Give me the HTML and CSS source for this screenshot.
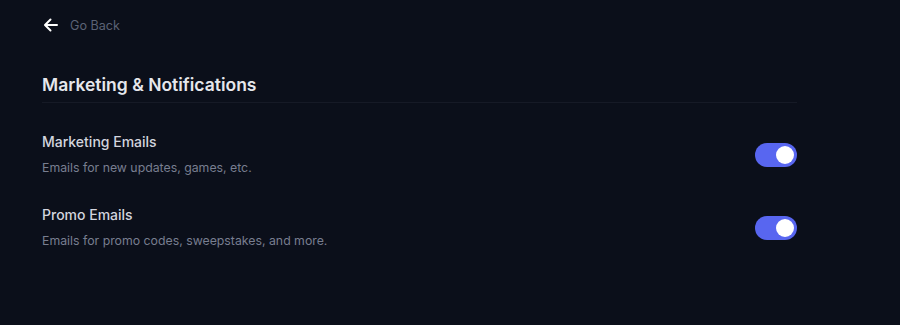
FILE: index.html
```html
<!DOCTYPE html>
<html>
<head>
<meta charset="utf-8">
<link rel="stylesheet" href="styles.css">
</head>
<body>
<div class="page">
  <a class="back" href="#">
    <svg class="back-icon" width="16" height="16" viewBox="0 0 16 16" fill="none" stroke="#ffffff" stroke-width="2" stroke-linecap="round" stroke-linejoin="round">
      <path d="M14 8H2.5M7.5 2.5L2 8l5.5 5.5"/>
    </svg>
    <span>Go Back</span>
  </a>
  <h1 class="title">Marketing &amp; Notifications</h1>
  <div class="list">
    <div class="row">
      <div class="text">
        <div class="label">Marketing Emails</div>
        <div class="desc">Emails for new updates, games, etc.</div>
      </div>
      <div class="toggle on"><span class="knob"></span></div>
    </div>
    <div class="row">
      <div class="text">
        <div class="label">Promo Emails</div>
        <div class="desc">Emails for promo codes, sweepstakes, and more.</div>
      </div>
      <div class="toggle on"><span class="knob"></span></div>
    </div>
  </div>
</div>
</body>
</html>
```

FILE: styles.css
```css
html, body {
  margin: 0;
  padding: 0;
  background: #0b0f1a;
  font-family: Inter, "Noto Sans", sans-serif;
}
.page {
  width: 755px;
  padding: 16px 0 0 42px;
}
.back {
  display: flex;
  align-items: center;
  gap: 11px;
  text-decoration: none;
  color: #5b6275;
  font-size: 12.6px;
  height: 18px;
}
.back-icon {
  margin-left: 1px;
}
.title {
  margin: 0;
  margin-top: 39px;
  font-size: 17.5px;
  font-weight: 600;
  color: #e6e7ec;
  line-height: 24px;
  padding-bottom: 5px;
  border-bottom: 1px solid #161a26;
}
.list {
  padding-top: 29px;
  display: flex;
  flex-direction: column;
  gap: 28px;
}
.row {
  display: flex;
  align-items: center;
  justify-content: space-between;
}
.label {
  font-size: 14px;
  font-weight: 500;
  color: #d3d5de;
  line-height: 20px;
}
.desc {
  margin-top: 7px;
  font-size: 12.3px;
  color: #787e90;
  line-height: 18px;
}
.toggle {
  width: 42px;
  height: 24px;
  border-radius: 12px;
  background: #3c4152;
  display: flex;
  align-items: center;
  padding: 0 3px;
  box-sizing: border-box;
}
.toggle.on {
  background: #5866f0;
  justify-content: flex-end;
}
.knob {
  width: 18px;
  height: 18px;
  border-radius: 50%;
  background: #ffffff;
}
```
